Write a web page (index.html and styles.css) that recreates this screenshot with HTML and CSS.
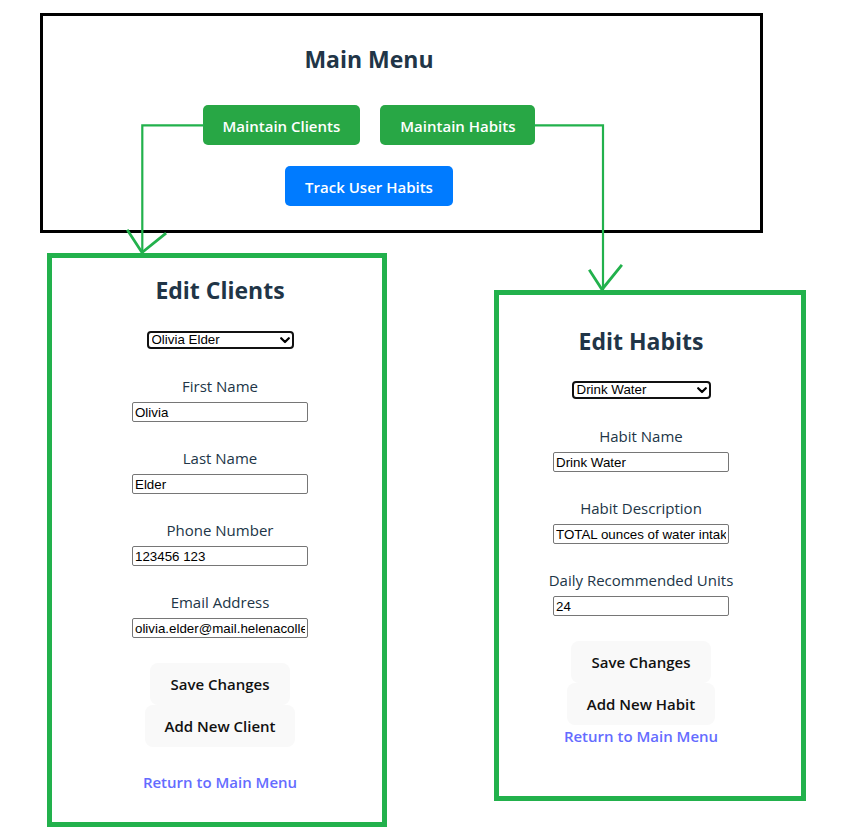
FILE: index.html
```html
<!DOCTYPE html>
<html lang="en">
<head>
<meta charset="utf-8">
<title>Habit Tracker</title>
<link rel="stylesheet" href="styles.css">
</head>
<body>
<div class="page">
  <section class="menu">
    <div class="menu-inner">
      <h1 class="title">Main Menu</h1>
      <div class="menu-row">
        <button class="btn btn-green">Maintain Clients</button>
        <button class="btn btn-green">Maintain Habits</button>
      </div>
      <button class="btn btn-blue">Track User Habits</button>
    </div>
  </section>

  <div class="panels">
    <section class="panel panel-clients">
      <h2 class="title">Edit Clients</h2>
      <div class="select-wrap select-clients">
        <select class="picker"><option>Olivia Elder</option></select>
        <svg class="chev" width="10" height="7" viewBox="0 0 10 7"><path d="M1.2 1.2 L5 5 L8.8 1.2" fill="none" stroke="#000" stroke-width="2.2" stroke-linecap="round" stroke-linejoin="round"/></svg>
      </div>
      <div class="field"><label>First Name</label><input class="text-in" type="text" value="Olivia"></div>
      <div class="field"><label>Last Name</label><input class="text-in" type="text" value="Elder"></div>
      <div class="field"><label>Phone Number</label><input class="text-in" type="text" value="123456 123"></div>
      <div class="field"><label>Email Address</label><input class="text-in" type="text" value="olivia.elder@mail.helenacollege.edu"></div>
      <div class="actions">
        <button class="soft-btn">Save Changes</button>
        <button class="soft-btn">Add New Client</button>
      </div>
      <a class="back back-gap" href="#">Return to Main Menu</a>
    </section>

    <section class="panel panel-habits">
      <h2 class="title">Edit Habits</h2>
      <div class="select-wrap select-habits">
        <select class="picker"><option>Drink Water</option></select>
        <svg class="chev" width="10" height="7" viewBox="0 0 10 7"><path d="M1.2 1.2 L5 5 L8.8 1.2" fill="none" stroke="#000" stroke-width="2.2" stroke-linecap="round" stroke-linejoin="round"/></svg>
      </div>
      <div class="field"><label>Habit Name</label><input class="text-in" type="text" value="Drink Water"></div>
      <div class="field"><label>Habit Description</label><input class="text-in" type="text" value="TOTAL ounces of water intake per day"></div>
      <div class="field"><label>Daily Recommended Units</label><input class="text-in" type="text" value="24"></div>
      <div class="actions">
        <button class="soft-btn">Save Changes</button>
        <button class="soft-btn">Add New Habit</button>
      </div>
      <a class="back" href="#">Return to Main Menu</a>
    </section>
  </div>

  <svg class="arrows" width="848" height="832" viewBox="0 0 848 832">
    <g fill="none" stroke="#22b14c" stroke-linecap="square">
      <polyline points="203,125.3 142.3,125.3 142.3,252" stroke-width="2.2"/>
      <polyline points="128,231 142,252.5 165,234" stroke-width="2.8" stroke-linejoin="miter"/>
      <polyline points="535,125.3 603,125.3 603,289" stroke-width="2.2"/>
      <polyline points="590,271 602,289.5 621,266" stroke-width="2.8" stroke-linejoin="miter"/>
    </g>
  </svg>
</div>
</body>
</html>
```

FILE: styles.css
```css
* { box-sizing: border-box; }

html, body {
  margin: 0;
  padding: 0;
  background: #fff;
}

body {
  font-family: "Open Sans", "Noto Sans", sans-serif;
  color: #213547;
}

.page {
  position: relative;
  width: 848px;
  height: 832px;
  overflow: hidden;
}

/* ---------- Main menu ---------- */
.menu {
  margin: 13px 0 0 40px;
  width: 723px;
  height: 220px;
  border: 3px solid #000;
}

.menu-inner {
  width: 652px;
  padding-top: 28px;
  display: flex;
  flex-direction: column;
  align-items: center;
}

.title {
  margin: 0;
  font-size: 23px;
  line-height: 30px;
  font-weight: 700;
  color: #213547;
  text-align: center;
}

.menu-inner .title { margin-bottom: 31px; }

.menu-row {
  display: flex;
  gap: 20px;
  margin-bottom: 21px;
}

.btn {
  height: 40px;
  padding: 2px 20px 0;
  border: none;
  border-radius: 5px;
  font-family: inherit;
  font-size: 15px;
  font-weight: 600;
  color: #fff;
  cursor: pointer;
}

.btn-green { background: #28a745; }
.btn-blue { background: #007bff; }

/* ---------- Panels ---------- */
.panels {
  display: flex;
  align-items: flex-start;
  padding-left: 47px;
}

.panel {
  border: 5px solid #22b14c;
  display: flex;
  flex-direction: column;
  align-items: center;
}

.panel-clients {
  margin-top: 20px;
  width: 340px;
  height: 574px;
  padding: 17px 0 0 6px;
}

.panel-habits {
  margin-top: 57px;
  margin-left: 107px;
  width: 312px;
  height: 511px;
  padding: 31px 18px 0 0;
}

.panel-clients .title { margin-bottom: 26px; }
.panel-habits .title { margin-bottom: 25px; }

.select-wrap {
  position: relative;
  height: 18px;
  margin-bottom: 26px;
}

.select-clients { width: 147px; }
.select-habits { width: 139px; }

.picker {
  appearance: none;
  -webkit-appearance: none;
  display: block;
  width: 100%;
  height: 18px;
  margin: 0;
  padding: 0 0 0 3px;
  border: 2px solid #111;
  border-radius: 4px;
  background: #fff;
  font-family: "Liberation Sans", Arial, sans-serif;
  font-size: 13.33px;
  line-height: 14px;
  color: #000;
}

.chev {
  position: absolute;
  right: 4px;
  top: 6px;
}

.field {
  display: flex;
  flex-direction: column;
  align-items: center;
}

.field + .field { margin-top: 25px; }

.field label {
  font-size: 15px;
  line-height: 22px;
  margin-bottom: 5px;
  color: #213547;
}

.text-in {
  width: 176px;
  height: 20px;
  margin: 0;
  padding: 1px 2px;
  border: 1px solid #767676;
  border-radius: 2px;
  font-family: "Liberation Sans", Arial, sans-serif;
  font-size: 13.33px;
  color: #000;
  background: #fff;
}

.actions {
  margin-top: 25px;
  display: flex;
  flex-direction: column;
  align-items: center;
}

.soft-btn {
  padding: 9.5px 19px;
  border: 1px solid transparent;
  border-radius: 8px;
  background: #f9f9f9;
  font-family: inherit;
  font-size: 15px;
  line-height: 21px;
  font-weight: 600;
  color: #111;
  cursor: pointer;
}

.back {
  font-size: 15px;
  line-height: 22px;
  font-weight: 600;
  color: #646cff;
  text-decoration: none;
}

.back-gap { margin-top: 24px; }

/* ---------- Connector arrows (drawn over the canvas) ---------- */
.arrows {
  position: absolute;
  left: 0;
  top: 0;
  pointer-events: none;
}
```
